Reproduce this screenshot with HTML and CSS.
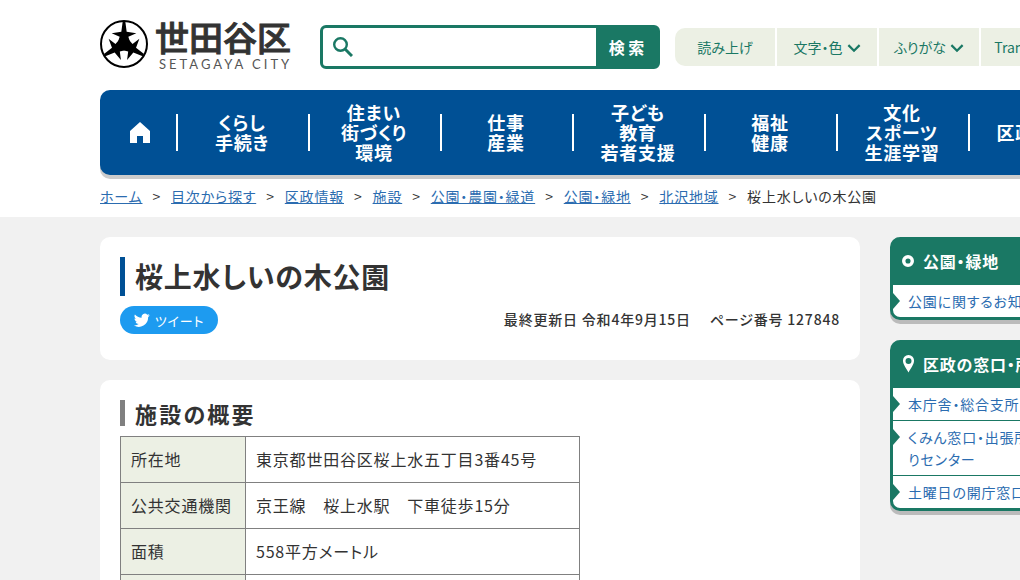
FILE: index.html
```html
<!DOCTYPE html>
<html lang="ja">
<head>
<meta charset="utf-8">
<title>桜上水しいの木公園 | 世田谷区</title>
<link rel="stylesheet" href="styles.css">
</head>
<body>
<header class="header wrap">
  <a class="logo" href="#">
    <svg class="logo-mark" viewBox="0 0 144 144" aria-hidden="true">
      <defs><path id="arm" d="M-4-67H4L8-37L37-32L13-22L17-10V10L0 19L-17 10V-10L-13-22L-37-32L-8-37Z"/></defs>
      <circle cx="72" cy="72" r="69" fill="none" stroke="#000" stroke-width="6"/>
      <g transform="translate(72 72)">
        <use href="#arm"/><use href="#arm" transform="rotate(120)"/><use href="#arm" transform="rotate(240)"/>
      </g>
    </svg>
    <span class="logo-text"><span class="logo-name">世田谷区</span><span class="logo-latin">SETAGAYA CITY</span></span>
  </a>
  <form class="search" role="search">
    <label class="search-label" for="q"><svg viewBox="0 0 20 20" width="20" height="20" role="img" aria-label="サイト内検索"><circle cx="7.5" cy="7.5" r="6.3" fill="none" stroke="#1a7864" stroke-width="2.4"/><path d="M12 12L19 19" stroke="#1a7864" stroke-width="3"/></svg></label>
    <input class="search-input" id="q" type="text">
    <button class="search-button" type="submit">検 索</button>
  </form>
  <div class="tools">
    <button class="tool" type="button">読み上げ</button>
    <button class="tool" type="button">文字・色<svg class="chevron" viewBox="0 0 12 8"><path d="M1 1L6 6L11 1"/></svg></button>
    <button class="tool" type="button">ふりがな<svg class="chevron" viewBox="0 0 12 8"><path d="M1 1L6 6L11 1"/></svg></button>
    <button class="tool" type="button">Translation</button>
  </div>
</header>
<div class="wrap">
  <nav class="nav">
    <a class="nav-home" href="#" aria-label="ホーム"><svg viewBox="0 0 20 21" width="20" height="21"><path d="M10 0L20 9V21H13V14H7V21H0V9Z" fill="#fff"/></svg></a>
    <a class="nav-item" href="#">くらし<br>手続き</a>
    <a class="nav-item" href="#">住まい<br>街づくり<br>環境</a>
    <a class="nav-item" href="#">仕事<br>産業</a>
    <a class="nav-item" href="#">子ども<br>教育<br>若者支援</a>
    <a class="nav-item" href="#">福祉<br>健康</a>
    <a class="nav-item" href="#">文化<br>スポーツ<br>生涯学習</a>
    <a class="nav-item" href="#">区政情報</a>
  </nav>
  <ol class="crumbs">
    <li><a href="#">ホーム</a></li>
    <li><a href="#">目次から探す</a></li>
    <li><a href="#">区政情報</a></li>
    <li><a href="#">施設</a></li>
    <li><a href="#">公園・農園・緑道</a></li>
    <li><a href="#">公園・緑地</a></li>
    <li><a href="#">北沢地域</a></li>
    <li>桜上水しいの木公園</li>
  </ol>
</div>
<div class="page">
  <div class="wrap columns">
    <main class="main">
      <section class="card">
        <h1 class="title">桜上水しいの木公園</h1>
        <div class="meta">
          <a class="tweet" href="#"><svg viewBox="0 0 24 24" width="16" height="16" aria-hidden="true"><path fill="#fff" d="M23.6 4.9c-.9.4-1.800.7-2.800.8 1-.6 1.800-1.600 2.200-2.700-1 .6-2 1-3.100 1.200A4.900 4.900 0 0 0 11.500 8.700C7.400 8.500 3.800 6.500 1.400 3.600c-1.300 2.200-.7 5.100 1.500 6.600-.8 0-1.600-.2-2.200-.6 0 2.300 1.600 4.400 3.900 4.900-.7.200-1.500.2-2.200.1.600 2 2.400 3.400 4.600 3.400A9.900 9.900 0 0 1-.3 20 14 14 0 0 0 21.200 7.500c1-.7 1.800-1.600 2.400-2.600z"/></svg>ツイート</a>
          <p class="dates"><span>最終更新日 令和4年9月15日</span><span>ページ番号 127848</span></p>
        </div>
      </section>
      <section class="card">
        <h2 class="subtitle">施設の概要</h2>
        <table class="facts">
          <tr><th scope="row">所在地</th><td>東京都世田谷区桜上水五丁目3番45号</td></tr>
          <tr><th scope="row">公共交通機関</th><td>京王線　桜上水駅　下車徒歩15分</td></tr>
          <tr><th scope="row">面積</th><td>558平方メートル</td></tr>
          <tr><th scope="row"></th><td></td></tr>
        </table>
      </section>
    </main>
    <aside class="side">
      <section class="box">
        <h2 class="box-title"><svg viewBox="0 0 14 14" width="12" height="12"><circle cx="7" cy="7" r="5" fill="none" stroke="#fff" stroke-width="4"/></svg>公園・緑地</h2>
        <ul class="box-list"><li><a href="#">公園に関するお知らせ</a></li></ul>
      </section>
      <section class="box">
        <h2 class="box-title"><svg viewBox="-1 0 12 18" width="12" height="18"><path fill="#fff" fill-rule="evenodd" d="M5.500 0a5.500 5.500 0 0 1 5.500 6c0 3-3 7-5.500 11.500C3 13 0 9 0 6a5.500 5.500 0 0 1 5.500-6zM5.500 3a3 3 0 1 0 0 6a3 3 0 0 0 0-6z"/></svg>区政の窓口・所在地</h2>
        <ul class="box-list">
          <li><a href="#">本庁舎・総合支所</a></li>
          <li><a href="#">くみん窓口・出張所・まちづくりセンター</a></li>
          <li><a href="#">土曜日の開庁窓口</a></li>
        </ul>
      </section>
    </aside>
  </div>
</div>
</body>
</html>
```
FILE: styles.css
```css
* { box-sizing: border-box; }
html { overflow-x: auto; scrollbar-width: none; }
body {
  margin: 0;
  min-width: 1240px;
  background: #fff;
  color: #333;
  font: 16px/25px "Noto Sans CJK JP", sans-serif;
  font-feature-settings: "palt";
  letter-spacing: 0.05em;
}
h1, h2, p, ul, ol { margin: 0; padding: 0; }
ul, ol { list-style: none; }
button, input { font: inherit; letter-spacing: inherit; font-feature-settings: inherit; border: 0; margin: 0; }
a { color: #2b6cb0; }
.wrap { padding-left: 100px; padding-right: 100px; }

.header { display: flex; align-items: center; height: 90px; padding-top: 4px; }
.logo { display: flex; gap: 7px; width: 220px; color: #333; text-decoration: none; }
.logo-mark { width: 48px; height: 48px; }
.logo-text { display: flex; flex-direction: column; white-space: nowrap; }
.logo-name { font-size: 34px; line-height: 34px; font-weight: 500; letter-spacing: 0; font-feature-settings: normal; -webkit-text-stroke: 1px #333; }
.logo-latin { font: 400 13px/20px Lato, sans-serif; letter-spacing: 3px; color: #555; padding-left: 4px; }

.search { display: flex; width: 340px; height: 44px; border: 3px solid #1a7864; border-radius: 6px; background: #1a7864; }
.search-label { display: flex; align-items: center; padding-left: 10px; background: #fff; border-radius: 3px 0 0 3px; }
.search-input { flex: 1; min-width: 0; padding: 0 8px; background: #fff; outline: 0; }
.search-button { width: 61px; padding: 0; background: #1a7864; color: #fff; font-weight: 700; letter-spacing: 0; }
.tools { display: flex; gap: 2px; margin-left: 15px; border-radius: 10px; overflow: hidden; }
.tool { width: 100px; height: 38px; padding: 0; background: #ecf0e4; color: #1a7864; font-size: 14px; letter-spacing: 0; white-space: nowrap; }
.chevron { width: 14px; height: 9px; margin-left: 4px; fill: none; stroke: #1a7864; stroke-width: 2; }

.nav { display: flex; align-items: center; min-height: 85px; border-radius: 10px; background: #005095; box-shadow: 0 4px 0 #ccc; }
.nav-home { display: flex; justify-content: center; width: 76px; padding-left: 4px; }
.nav-item { display: flex; position: relative; justify-content: center; align-items: center; width: 132px; padding-bottom: 2px; color: #fff; font-size: 18px; line-height: 20px; font-weight: 700; text-align: center; text-decoration: none; }
.nav-item::before { content: ""; position: absolute; left: 0; top: calc(50% - 19px); width: 2px; height: 37px; background: #fff; }
.crumbs { display: flex; padding: 10px 0; font-size: 14px; line-height: 22px; }
.crumbs li + li::before { content: ">"; margin: 0 10px; }

.page { background: #f1f1f1; padding: 20px 0; }
.columns { display: flex; gap: 30px; align-items: flex-start; }
.main { flex: 1; display: grid; gap: 20px; }
.card { padding: 20px; border-radius: 10px; background: #fff; }
.title { border-left: 5px solid #005095; padding-left: 10px; font-size: 28px; line-height: 39px; }
.meta { display: flex; justify-content: space-between; padding: 10px 0 6px; }
.tweet { display: flex; align-items: center; justify-content: center; gap: 5px; width: 98px; height: 28px; border-radius: 14px; background: #1d9bf0; color: #fff; font-size: 13px; text-decoration: none; }
.dates { display: flex; gap: 19px; font-size: 14px; line-height: 26px; font-weight: 500; }
.subtitle { border-left: 5px solid #808080; padding-left: 10px; margin-bottom: 10px; font-size: 22px; line-height: 26px; letter-spacing: 0.1em; }
.facts { width: 460px; border-collapse: collapse; }
.facts th, .facts td { border: 1px solid #808080; padding: 10px; height: 46px; text-align: left; font-weight: 400; }
.facts th { width: 125px; background: #ecf0e4; white-space: nowrap; }

.side { display: grid; gap: 20px; width: 250px; }
.box { border: 3px solid #1a7864; border-top: 0; border-radius: 10px; background: #1a7864; box-shadow: 0 4px 0 #bbb; }
.box-title { display: flex; align-items: center; gap: 9px; height: 48px; padding-left: 9px; color: #fff; font-size: 16px; white-space: nowrap; }
.box-title svg { flex: none; }
.box-list { background: #fff; border-radius: 7px; border-top-left-radius: 0; border-top-right-radius: 0; font-size: 14px; line-height: 22px; }
.box-list li { position: relative; padding: 5px 40px 5px 15px; }
.box-list li + li { border-top: 1px solid #1a7864; }
.box-list li::before { content: ""; position: absolute; left: 0; top: 8px; border: 8px solid transparent; border-left: 7px solid #1a7864; border-right: 0; }
.box-list a { text-decoration: none; }
```
